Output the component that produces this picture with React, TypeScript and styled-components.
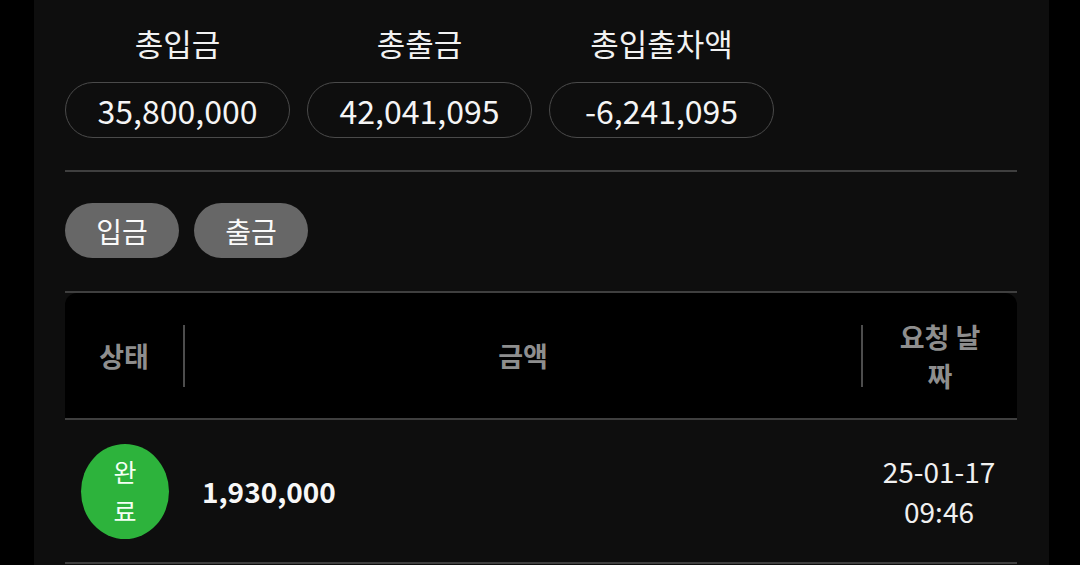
import React from "react";
import styled, { createGlobalStyle } from "styled-components";

const GlobalStyle = createGlobalStyle`
  html, body {
    margin: 0;
    padding: 0;
    background: #000;
    font-family: "Noto Sans CJK KR", "Noto Sans", sans-serif;
  }
  * { box-sizing: border-box; }
`;

const Page = styled.div`
  min-height: 565px;
  background: #000;
  display: flex;
  padding-left: 34px;
`;

const Panel = styled.main`
  width: 1015px;
  min-height: 565px;
  background: #0e0e0e;
  padding: 23px 32px 0 31px;
  display: flex;
  flex-direction: column;
`;

const SummaryRow = styled.section`
  display: flex;
  gap: 17px;
`;

const SummaryItem = styled.div`
  width: 225px;
  display: flex;
  flex-direction: column;
  align-items: center;
`;

const SummaryLabel = styled.div`
  font-size: 31px;
  line-height: 40px;
  color: #f2f2f2;
  margin-bottom: 19px;
`;

const ValuePill = styled.div`
  width: 100%;
  height: 56px;
  border: 1.5px solid #4a4a4a;
  border-radius: 28px;
  display: flex;
  align-items: center;
  justify-content: center;
  font-size: 32px;
  color: #f5f5f5;
`;

const Divider = styled.hr<{ $top: number }>`
  margin: ${(p) => p.$top}px 0 0;
  border: none;
  border-top: 2px solid #3f3f3f;
  height: 0;
`;

const FilterRow = styled.div`
  display: flex;
  gap: 15px;
  margin-top: 31px;
`;

const FilterButton = styled.button`
  width: 114px;
  height: 55px;
  border: none;
  border-radius: 28px;
  background: #676767;
  color: #fafafa;
  font-family: inherit;
  font-size: 28px;
  padding: 0;
  display: flex;
  align-items: center;
  justify-content: center;
`;

const Table = styled.div`
  display: flex;
  flex-direction: column;
`;

const HeaderRow = styled.div`
  height: 127px;
  background: #000;
  border-radius: 12px 12px 0 0;
  border-bottom: 2px solid #3f3f3f;
  display: flex;
  align-items: center;
`;

const BodyRow = styled.div`
  height: 144px;
  border-bottom: 2px solid #3f3f3f;
  display: flex;
  align-items: center;
`;

const Cell = styled.div<{ $w?: number; $align?: "center" | "left" }>`
  ${(p) => (p.$w ? `width: ${p.$w}px; flex: none;` : "flex: 1;")}
  display: flex;
  align-items: center;
  justify-content: ${(p) => (p.$align === "left" ? "flex-start" : "center")};
  text-align: center;
`;

const HeadText = styled.div<{ $maxW?: number }>`
  font-size: 27px;
  font-weight: 700;
  line-height: 39px;
  color: #8e8e8e;
  ${(p) => (p.$maxW ? `max-width: ${p.$maxW}px;` : "")}
`;

const Separator = styled.div`
  width: 2px;
  height: 62px;
  background: #4d4d4d;
  flex: none;
`;

const StatusBadge = styled.div`
  width: 88px;
  height: 95px;
  border-radius: 50%;
  background: #2db33c;
  color: #f4fff4;
  display: flex;
  align-items: center;
  justify-content: center;
`;

const BadgeText = styled.span`
  width: 1.1em;
  font-size: 25px;
  line-height: 39px;
  word-break: break-all;
  text-align: center;
`;

const Amount = styled.div`
  padding-left: 17px;
  font-size: 28px;
  font-weight: 700;
  color: #f7f7f7;
`;

const DateText = styled.div`
  font-size: 28px;
  line-height: 40px;
  color: #f0f0f0;
  text-align: center;
`;

const summary = [
  { label: "총입금", value: "35,800,000" },
  { label: "총출금", value: "42,041,095" },
  { label: "총입출차액", value: "-6,241,095" },
];

export default function App() {
  return (
    <>
      <GlobalStyle />
      <Page>
        <Panel>
          <SummaryRow>
            {summary.map((s) => (
              <SummaryItem key={s.label}>
                <SummaryLabel>{s.label}</SummaryLabel>
                <ValuePill>{s.value}</ValuePill>
              </SummaryItem>
            ))}
          </SummaryRow>
          <Divider $top={32} />
          <FilterRow>
            <FilterButton>입금</FilterButton>
            <FilterButton>출금</FilterButton>
          </FilterRow>
          <Divider $top={33} />
          <Table>
            <HeaderRow>
              <Cell $w={118}>
                <HeadText>상태</HeadText>
              </Cell>
              <Separator />
              <Cell>
                <HeadText>금액</HeadText>
              </Cell>
              <Separator />
              <Cell $w={154}>
                <HeadText $maxW={100}>요청 날짜</HeadText>
              </Cell>
            </HeaderRow>
            <BodyRow>
              <Cell $w={120}>
                <StatusBadge>
                  <BadgeText>완료</BadgeText>
                </StatusBadge>
              </Cell>
              <Cell $align="left">
                <Amount>1,930,000</Amount>
              </Cell>
              <Cell $w={156}>
                <DateText>
                  25-01-17
                  <br />
                  09:46
                </DateText>
              </Cell>
            </BodyRow>
          </Table>
        </Panel>
      </Page>
    </>
  );
}
